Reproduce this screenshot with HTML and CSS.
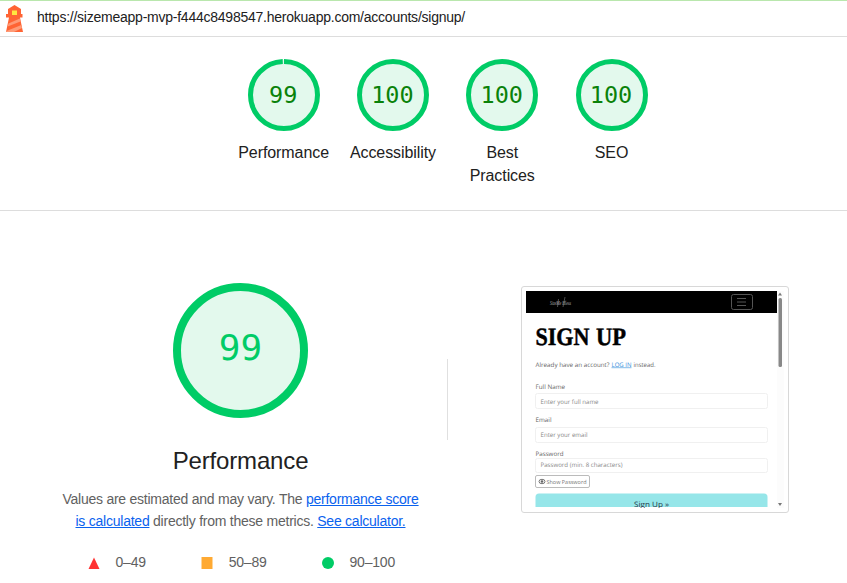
FILE: index.html
```html
<!DOCTYPE html>
<html lang="en">
<head>
<meta charset="utf-8">
<title>Lighthouse report</title>
<link rel="stylesheet" href="styles.css">
</head>
<body>
<header class="topbar">
  <svg class="logo" width="20" height="28" viewBox="0 0 20 28">
    <path fill="#ff6434" d="M9.500 0 16 4V9H17.500V12.500H15L16.500 20 18 27H1L4 12.500H1V9H3V4Z"/>
    <path fill="#ff9b77" d="M3.500 18.500 14.800 13.500 15.400 16.500 2.700 21.500ZM1.500 26 16.400 20 17 23 9 27H1Z"/>
    <path fill="#ffe640" d="M7 5.500h5v4.500H7z"/>
  </svg>
  <span class="url">https://sizemeapp-mvp-f444c8498547.herokuapp.com/accounts/signup/</span>
</header>
<nav class="scores">
  <div class="score">
    <div class="gauge"><svg class="ring" viewBox="0 0 72 72"><circle class="track" cx="36" cy="36" r="35"/><circle class="arc" cx="36" cy="36" r="33.500" pathLength="100" stroke-dasharray="99.400 .6" transform="rotate(-90 36 36)"/></svg><span class="value">99</span></div>
    <div class="label">Performance</div>
  </div>
  <div class="score">
    <div class="gauge"><svg class="ring" viewBox="0 0 72 72"><circle class="track" cx="36" cy="36" r="35"/><circle class="arc" cx="36" cy="36" r="33.500"/></svg><span class="value">100</span></div>
    <div class="label">Accessibility</div>
  </div>
  <div class="score">
    <div class="gauge"><svg class="ring" viewBox="0 0 72 72"><circle class="track" cx="36" cy="36" r="35"/><circle class="arc" cx="36" cy="36" r="33.500"/></svg><span class="value">100</span></div>
    <div class="label">Best<br>Practices</div>
  </div>
  <div class="score">
    <div class="gauge"><svg class="ring" viewBox="0 0 72 72"><circle class="track" cx="36" cy="36" r="35"/><circle class="arc" cx="36" cy="36" r="33.500"/></svg><span class="value">100</span></div>
    <div class="label">SEO</div>
  </div>
</nav>
<main class="category">
  <section class="summary">
    <div class="big-gauge"><span>99</span></div>
    <h1>Performance</h1>
    <p class="note">Values are estimated and may vary. The <a href="#">performance score</a><br><a href="#">is calculated</a> directly from these metrics. <a href="#">See calculator.</a></p>
    <div class="legend">
      <span class="range"><svg width="12" height="13"><path fill="#f33" d="M6 1.500 11.500 13H.5Z"/></svg>0–49</span>
      <span class="range"><svg width="12" height="13"><path fill="#fa3" d="M.5 1h11v12H.5z"/></svg>50–89</span>
      <span class="range"><svg width="12" height="13"><circle fill="#0c6" cx="6" cy="7" r="6"/></svg>90–100</span>
    </div>
  </section>
  <div class="rule"></div>
  <figure class="shot">
    <svg width="258" height="217" viewBox="526 291 258 217">
      <path fill="#fcfcfc" d="M777 291h7v217h-7z"/>
      <path d="M526 291h251v22H526z"/>
      <text class="script" x="550" y="305" textLength="21" lengthAdjust="spacingAndGlyphs">SizeMe Hless</text>
      <path class="flourish" d="M557.500 307l1-8m4.500 8 2-10"/>
      <rect class="toggle" x="731.500" y="294.500" width="21" height="15" rx="2"/>
      <path class="bars" d="M737 298.500h9m-9 3.500h9m-9 3.500h9"/>
      <path fill="#777" d="m778 295.500 2-3 2 3zM778 503h4l-2 3z"/>
      <rect fill="#888" x="778.500" y="298" width="3.500" height="69" rx="1.500"/>
      <text class="headline" x="535.500" y="345" textLength="54" lengthAdjust="spacingAndGlyphs">SIGN</text>
      <text class="headline" x="596" y="345" textLength="30" lengthAdjust="spacingAndGlyphs">UP</text>
      <text class="copy" x="535.500" y="366.500" textLength="74" lengthAdjust="spacingAndGlyphs">Already have an account?</text>
      <text class="copy login" x="611.500" y="366.500" textLength="20" lengthAdjust="spacingAndGlyphs">LOG IN</text>
      <text class="copy" x="633.500" y="366.500" textLength="22" lengthAdjust="spacingAndGlyphs">instead.</text>
      <text class="copy" x="535.500" y="388.500" textLength="29.500" lengthAdjust="spacingAndGlyphs">Full Name</text>
      <rect class="field" x="535.500" y="393.500" width="232" height="15" rx="2"/>
      <text class="hint" x="540.500" y="403.500" textLength="58" lengthAdjust="spacingAndGlyphs">Enter your full name</text>
      <text class="copy" x="535.500" y="421.800" textLength="16" lengthAdjust="spacingAndGlyphs">Email</text>
      <rect class="field" x="535.500" y="427.500" width="232" height="15" rx="2"/>
      <text class="hint" x="540.500" y="437" textLength="47" lengthAdjust="spacingAndGlyphs">Enter your email</text>
      <text class="copy" x="535.500" y="455.500" textLength="28" lengthAdjust="spacingAndGlyphs">Password</text>
      <rect class="field" x="535.500" y="458.500" width="232" height="14" rx="2"/>
      <text class="hint" x="540.500" y="467.300" textLength="82" lengthAdjust="spacingAndGlyphs">Password (min. 8 characters)</text>
      <rect class="show" x="535.500" y="475.500" width="54" height="12" rx="1.500"/>
      <ellipse class="eye" cx="542" cy="481.500" rx="3" ry="2.200"/><circle fill="#666" cx="542" cy="481.500" r="1.300"/>
      <text class="small" x="546.500" y="483.500" textLength="40" lengthAdjust="spacingAndGlyphs">Show Password</text>
      <path fill="#96e6e9" d="M535.500 507V497q0-3.500 3.500-3.500h225q3.500 0 3.500 3.500v10z"/>
      <text class="submit" x="634" y="506.500" textLength="35" lengthAdjust="spacingAndGlyphs">Sign Up »</text>
    </svg>
  </figure>
</main>
</body>
</html>
```
FILE: styles.css
```css
* { box-sizing: border-box; }
body { margin: 0; height: 583px; overflow: hidden; background: #fff; color: #212121; font-family: "Liberation Sans", Arial, sans-serif; }
.topbar { height: 37px; border-top: 1px solid #b9e7ad; border-bottom: 1px solid #ddd; display: flex; align-items: flex-start; padding: 4px 0 0 5px; }
.url { font-size: 14px; line-height: 18px; margin: 3px 0 0 12px; letter-spacing: -.24px; }
.scores { height: 174px; padding: 22px 0 0 229px; display: flex; border-bottom: 1px solid #ddd; }
.score { width: 109.300px; display: flex; flex-direction: column; align-items: center; }
.gauge { width: 72px; height: 72px; display: grid; place-items: center; }
.gauge > * { grid-area: 1 / 1; }
.ring { width: 72px; height: 72px; display: block; }
.track { fill: #e3f9ed; }
.arc { fill: none; stroke: #0c6; stroke-width: 5; }
.value { font: 23.500px/24px "DejaVu Sans Mono", monospace; color: #0a820a; margin-right: 1px; }
.label { margin-top: 10px; font-size: 16px; line-height: 23px; text-align: center; letter-spacing: -.08px; }
.category { display: flex; align-items: flex-start; }
.summary { width: 447px; padding: 72px 0 0 34px; display: flex; flex-direction: column; align-items: center; }
.big-gauge { width: 135px; height: 135px; border: 8px solid #0c6; border-radius: 50%; background: #e3f9ed; display: flex; justify-content: center; align-items: center; font: 36px/40px "DejaVu Sans Mono", monospace; color: #0c6; padding-bottom: 6px; }
h1 { font-size: 24px; font-weight: 400; line-height: 30px; margin: 28px 0 0; letter-spacing: -.15px; }
.note { font-size: 14px; line-height: 22px; color: #616161; margin: 12px 0 0; text-align: center; white-space: nowrap; letter-spacing: -.24px; }
.note a { color: #0a62ee; text-decoration: underline; }
.legend { width: 307px; margin: 21px 0 0 2px; display: flex; justify-content: space-between; font-size: 14px; line-height: 18px; color: #616161; letter-spacing: -.2px; }
.range { display: flex; align-items: center; gap: 15.500px; }
.rule { width: 1px; height: 81px; margin-top: 148px; background: #e0e0e0; }
.shot { width: 268px; height: 227px; margin: 75px 0 0 73px; padding: 4px; border: 1px solid #d8d8d8; border-radius: 3px; }
.shot svg { display: block; }
.shot text { font-family: "Open Sans", Lato, sans-serif; font-weight: 400; text-rendering: geometricPrecision; }
.shot .script { font: italic 6px "Liberation Serif", serif; fill: #bbb; }
.flourish { fill: none; stroke: #999; stroke-width: .5; }
.toggle { fill: none; stroke: #555; }
.bars { stroke: #555; stroke-width: 1; }
.shot .headline { font: bold 25px "Liberation Serif", serif; fill: #000; stroke: #000; stroke-width: .5; }
.copy { font-size: 6.200px; fill: #666; }
.login { fill: #3b91dc; text-decoration: underline; }
.hint { font-size: 6.200px; fill: #888; }
.small { font-size: 5.500px; fill: #777; }
.field { fill: #fff; stroke: #f0f0f0; }
.show { fill: #fff; stroke: #bbb; }
.eye { fill: none; stroke: #777; }
.submit { font-size: 7.500px; fill: #234; }
```
